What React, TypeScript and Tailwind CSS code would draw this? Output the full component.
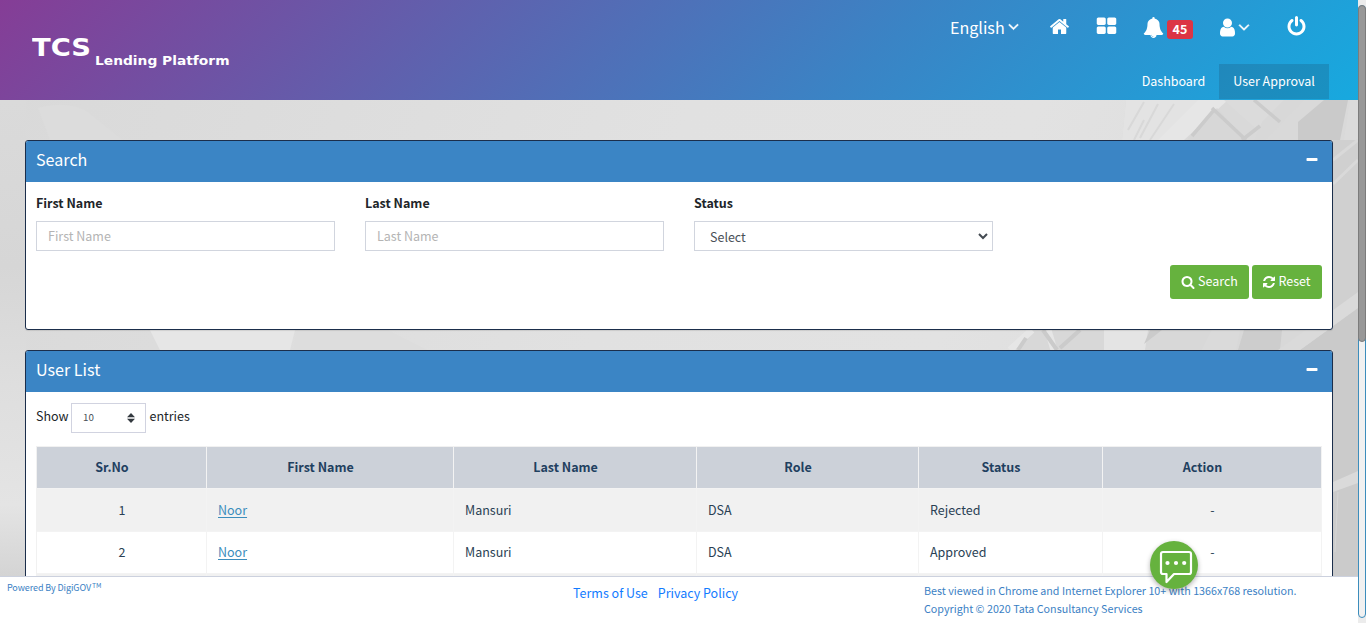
import React from "react";

const ICONS = {
  home: "M1472 992v480q0 26-19 45t-45 19h-384v-384h-256v384h-384q-26 0-45-19t-19-45v-480q0-1 .5-3t.5-3l575-474 575 474q1 2 1 6zm223-69l-62 74q-8 9-21 11h-3q-13 0-21-7l-692-577-692 577q-12 8-24 7-13-2-21-11l-62-74q-8-10-7-23.500t11-21.500l719-599q32-26 76-26t76 26l244 204v-195q0-14 9-23t23-9h192q14 0 23 9t9 23v408l219 182q10 8 11 21.500t-7 23.500z",
  grid: "M832 1024v384q0 52-38 90t-90 38h-512q-52 0-90-38t-38-90v-384q0-52 38-90t90-38h512q52 0 90 38t38 90zm0-768v384q0 52-38 90t-90 38h-512q-52 0-90-38t-38-90v-384q0-52 38-90t90-38h512q52 0 90 38t38 90zm896 768v384q0 52-38 90t-90 38h-512q-52 0-90-38t-38-90v-384q0-52 38-90t90-38h512q52 0 90 38t38 90zm0-768v384q0 52-38 90t-90 38h-512q-52 0-90-38t-38-90v-384q0-52 38-90t90-38h512q52 0 90 38t38 90z",
  power: "M1664 896q0 156-61 298t-164 245-245 164-298 61-298-61-245-164-164-245-61-298q0-182 80.500-343t226.500-270q43-32 95.500-25t83.500 50q32 42 24.500 94.500t-49.500 84.500q-98 74-151.500 181t-53.500 228q0 104 40.500 198.500t109.500 163.500 163.500 109.500 198.500 40.500 198.500-40.500 163.500-109.500 109.500-163.500 40.500-198.500q0-121-53.500-228t-151.500-181q-42-32-49.500-84.500t24.500-94.500q31-43 84-50t95 25q146 109 226.500 270t80.500 343zm-640-768v640q0 52-38 90t-90 38-90-38-38-90v-640q0-52 38-90t90-38 90 38 38 90z",
  bell: "M912 1696q0-16-16-16-59 0-101.500-42.500t-42.500-101.500q0-16-16-16t-16 16q0 73 51.500 124.500t124.500 51.500q16 0 16-16zm816-288q0 52-38 90t-90 38h-448q0 106-75 181t-181 75-181-75-75-181h-448q-52 0-90-38t-38-90q50-42 91-88t85-119.500 74.500-158.500 50-206 19.500-260q0-152 117-282.500t307-158.500q-8-19-8-39 0-40 28-68t68-28 68 28 28 68q0 20-8 39 190 28 307 158.500t117 282.500q0 139 19.500 260t50 206 74.500 158.500 85 119.500 91 88z",
  user: "M1536 1399q0 109-62.500 187t-150.500 78h-854q-88 0-150.500-78t-62.500-187q0-85 8.500-160.500t31.500-152 58.500-131 94-89 134.500-34.500q131 128 313 128t313-128q76 0 134.500 34.500t94 89 58.500 131 31.500 152 8.500 160.500zm-256-887q0 159-112.500 271.500t-271.500 112.500-271.500-112.500-112.500-271.500 112.500-271.500 271.500-112.500 271.500 112.500 112.500 271.500z",
  angle: "M1395 736q0 13-10 23l-466 466q-10 10-23 10t-23-10l-466-466q-10-10-10-23t10-23l50-50q10-10 23-10t23 10l393 393 393-393q10-10 23-10t23 10l50 50q10 10 10 23z",
  search: "M1216 832q0-185-131.500-316.500t-316.500-131.500-316.500 131.500-131.500 316.500 131.500 316.500 316.500 131.500 316.500-131.500 131.500-316.500zm512 832q0 52-38 90t-90 38q-54 0-90-38l-343-342q-179 124-399 124-143 0-273.500-55.500t-225-150-150-225-55.500-273.500 55.500-273.500 150-225 225-150 273.500-55.500 273.500 55.500 225 150 150 225 55.500 273.500q0 220-124 399l343 343q37 37 37 90z",
  refresh: "M1639 1056q0 5-1 7-64 268-268 434.500t-478 166.500q-146 0-282.500-55t-243.500-157l-129 129q-19 19-45 19t-45-19-19-45v-448q0-26 19-45t45-19h448q26 0 45 19t19 45-19 45l-137 137q71 66 161 102t187 36q134 0 250-65t186-179q11-17 53-117 8-23 30-23h192q13 0 22.500 9.500t9.500 22.500zm25-800v448q0 26-19 45t-45 19h-448q-26 0-45-19t-19-45 19-45l138-138q-148-137-349-137-134 0-250 65t-186 179q-11 17-53 117-8 23-30 23h-199q-13 0-22.500-9.500t-9.500-22.500v-7q65-268 270-434.500t480-166.500q146 0 284 55.500t245 156.500l130-129q19-19 45-19t45 19 19 45z",
  minus: "M1600 736v192q0 40-28 68t-68 28h-1216q-40 0-68-28t-28-68v-192q0-40 28-68t68-28h1216q40 0 68 28t28 68z",
};

function Icon({ name, className = "size-[21px]" }: { name: keyof typeof ICONS; className?: string }) {
  return (
    <svg viewBox="0 0 1792 1792" fill="currentColor" className={`shrink-0 overflow-visible ${className}`} aria-hidden="true">
      <path d={ICONS[name]} />
    </svg>
  );
}

function Header() {
  return (
    <header className="flex h-[100px] justify-between bg-[linear-gradient(135deg,#853d96_0%,#3a84c5_64%,#17a9df_100%)] pl-8 pr-[29px] text-white">
      <div className="flex pt-[34px] font-['DejaVu_Sans',sans-serif] font-bold">
        <span className="w-[63px] origin-left scale-x-[1.14] text-[24px] leading-[28px]">TCS</span>
        <span className="origin-left scale-x-[1.2] pt-[17px] text-[11.5px] leading-[20px]">Lending Platform</span>
      </div>
      <div className="flex flex-col items-end">
        <div className="flex h-16 items-start pr-[22px]">
          <span className="mt-[13px] w-[55px] text-[16.1px] leading-7">English</span>
          <Icon name="angle" className="mt-[18px] size-[17px] stroke-white [stroke-width:70]" />
          <Icon name="home" className="ml-[27px] mt-[16px] size-[21px]" />
          <Icon name="grid" className="ml-[26px] mt-[16px] size-[21px]" />
          <Icon name="bell" className="ml-[26px] mt-[17px] size-[21px]" />
          <span className="ml-[3px] mt-5 flex h-[19px] w-[26px] items-center justify-center rounded-[3px] bg-[#dc3545] text-[12.5px] leading-none font-bold">45</span>
          <Icon name="user" className="ml-6 mt-[17px] size-[21px]" />
          <Icon name="angle" className="-ml-[3px] mr-px mt-[18px] size-[18px] stroke-white [stroke-width:50]" />
          <Icon name="power" className="ml-[32px] mt-[16px] size-[21px]" />
        </div>
        <nav className="flex text-[12.5px]">
          <a className="flex h-[35px] w-[91px] items-center justify-center">Dashboard</a>
          <a className="flex h-[35px] w-[110px] items-center justify-center bg-[#1c2c40]/18">User Approval</a>
        </nav>
      </div>
    </header>
  );
}

function Panel({ title, className = "", children }: { title: string; className?: string; children: React.ReactNode }) {
  return (
    <section className={`relative w-[1308px] overflow-hidden rounded-[3px] border border-[#1b2e4b] bg-white shadow-[0_1px_1px_rgba(0,0,0,0.1)] ${className}`}>
      <div className="flex h-[41px] items-center justify-between bg-[#3b85c5] pl-[10px] pr-[13px] text-white">
        <h2 className="-mt-[5px] text-[16.1px]">{title}</h2>
        <Icon name="minus" className="-mt-[3px] size-[14px]" />
      </div>
      {children}
    </section>
  );
}

function SearchPanel() {
  return (
    <Panel title="Search" className="h-[190px]">
      <div className="flex gap-[30px] px-[10px] pt-[10px] text-[12.5px]">
        {["First Name", "Last Name"].map((label) => (
          <label key={label} className="flex w-[299px] flex-col">
            <span className="h-[29px] leading-[21px] font-bold text-[#212529]">{label}</span>
            <input
              placeholder={label}
              className="h-[30px] border border-[#d1d5de] bg-white px-[11px] pb-[2px] text-[12.5px] placeholder:text-[#b4b4b4]"
            />
          </label>
        ))}
        <div className="flex w-[299px] flex-col">
          <span className="h-[29px] leading-[21px] font-bold text-[#212529]">Status</span>
          <div className="flex h-[30px] items-center justify-between border border-[#d1d5de] pr-[4px] pl-[15px] text-[#495057]">
            <span className="pt-[2px]">Select</span>
            <svg viewBox="0 0 10 7" className="h-[7px] w-[10px]" fill="none" stroke="#444b52" strokeWidth="2">
              <path d="M1 1l4 4 4-4" />
            </svg>
          </div>
        </div>
      </div>
      <div className="mt-[14px] flex justify-end gap-[3px] pr-[10px] text-[12.5px] text-white">
        <button className="flex h-[34px] w-[79px] items-center justify-center gap-[3px] rounded-[3px] bg-[#66b23e] pb-[2px]">
          <Icon name="search" className="mt-px size-[14px]" />
          Search
        </button>
        <button className="flex h-[34px] w-[70px] items-center justify-center gap-[2px] rounded-[3px] bg-[#66b23e] pr-px pb-[2px]">
          <Icon name="refresh" className="mt-px size-[14px]" />
          Reset
        </button>
      </div>
    </Panel>
  );
}

const COLUMNS = ["Sr.No", "First Name", "Last Name", "Role", "Status", "Action"];
const USERS = [
  { no: "1", first: "Noor", last: "Mansuri", role: "DSA", status: "Rejected", row: "h-[43px] bg-[#f1f1f1]" },
  { no: "2", first: "Noor", last: "Mansuri", role: "DSA", status: "Approved", row: "h-[42px] bg-white" },
  { no: "", first: "", last: "", role: "", status: "", row: "h-[43px] bg-[#f1f1f1]" },
];

function UserTable() {
  const cell = "border-r border-b border-[#f3f3f3] pr-[10px] pl-[11px] py-0";
  return (
    <table className="ml-[10px] w-[1286px] table-fixed border-separate border-spacing-0 border-t border-l border-[#f1f1f1] text-[12.5px]">
      <colgroup>
        <col className="w-[170px]" />
        <col className="w-[247px]" />
        <col className="w-[243px]" />
        <col className="w-[222px]" />
        <col className="w-[184px]" />
        <col className="w-[219px]" />
      </colgroup>
      <thead>
        <tr className="h-[42px] bg-[#ccd1d9] text-[#1f4060]">
          {COLUMNS.map((c) => (
            <th key={c} className="border-r border-b border-[#f3f3f3] py-0 pr-[29px] pl-[10px] text-center font-bold">
              {c}
            </th>
          ))}
        </tr>
      </thead>
      <tbody className="text-[#2a3f54]">
        {USERS.map((u, i) => (
          <tr key={i} className={u.row}>
            <td className={`${cell} text-center`}>{u.no}</td>
            <td className={cell}>
              <a className="text-[#3c8dbc] underline decoration-1 underline-offset-2">{u.first}</a>
            </td>
            <td className={cell}>{u.last}</td>
            <td className={cell}>{u.role}</td>
            <td className={cell}>{u.status}</td>
            <td className={`${cell} text-center`}>{u.no && "-"}</td>
          </tr>
        ))}
      </tbody>
    </table>
  );
}

function UserListPanel() {
  return (
    <Panel title="User List" className="mt-5 h-[300px]">
      <div className="mt-[11px] mb-[13px] flex h-[30px] items-center pl-[10px] text-[12.5px] text-[#212529]">
        <span className="-mt-[3px] w-[35px]">Show</span>
        <div className="flex h-[30px] w-[75px] items-center justify-between border border-[#d1d3e0] pr-[10px] pl-[11px] text-[9.8px] text-[#495057]">
          <span className="pb-[2px]">10</span>
          <svg viewBox="0 0 8 10" className="h-[10px] w-[8px]" fill="#343a40">
            <path d="M4 0l4 4.200H0zM4 10l4-4.200H0z" />
          </svg>
        </div>
        <span className="-mt-[3px] ml-[3.500px]">entries</span>
      </div>
      <UserTable />
    </Panel>
  );
}

function Backdrop() {
  return (
    <svg className="absolute inset-0 h-full w-full" viewBox="0 0 1358 476" preserveAspectRatio="none" aria-hidden="true">
      <defs>
        <linearGradient id="sky" x1="0" y1="0" x2="1" y2="0.15">
          <stop offset="0" stopColor="#d9d9d9" />
          <stop offset="0.5" stopColor="#e1e1e1" />
          <stop offset="0.75" stopColor="#e2e2e2" />
          <stop offset="1" stopColor="#dcdcdc" />
        </linearGradient>
        <linearGradient id="left" x1="0" y1="0" x2="0" y2="1">
          <stop offset="0" stopColor="#dadada" />
          <stop offset="0.35" stopColor="#d6d6d6" />
          <stop offset="0.6" stopColor="#dedede" />
          <stop offset="0.85" stopColor="#e4e4e4" />
          <stop offset="1" stopColor="#d4d4d4" />
        </linearGradient>
      </defs>
      <rect width="1358" height="476" fill="url(#sky)" />
      <rect width="26" height="476" fill="url(#left)" />
      <path d="M38 8q30-8 50 4l35 28H50z" fill="#dcdcdc" />
      <path d="M150 230h145l-5 20H160z" fill="#e6e6e6" />
      <path d="M297 230h90l40 20H293z" fill="#dddddd" />
      <path d="M1126 0h232v40h-236z" fill="#d9d9d9" />
      <path d="M1126 0h80l-44 40h-40z" fill="#e3e3e3" />
      <path d="M1128 30l16-28M1140 38l18-34M1150 40l24-36M1134 40l10-20" stroke="#d8d8d8" strokeWidth="2" fill="none" />
      <path d="M1198 0h30l-44 40h-26z" fill="#e6e6e6" />
      <path d="M1217 8l28 32h-58z" fill="#d7d7d7" />
      <path d="M1224 0h62l-24 34z" fill="#dbdbdb" />
      <path d="M1262 22l22-22h20l-38 40h-12z" fill="#d8d8d8" />
      <path d="M1212 8l34 32M1242 40l18-14M1254 0l26 22M1192 36l22-26" stroke="#cbcbcb" strokeWidth="3.500" fill="none" />
      <path d="M1298 22l26-22h24l-8 40h-42z" fill="#cacaca" />
      <path d="M1350 0h8v40h-14z" fill="#dbdbdb" />
      <path d="M1333 40h25v191h-25z" fill="#d0d0d0" />
      <path d="M1333 60l25-20M1333 84l25-24" stroke="#d9d9d9" strokeWidth="3" fill="none" />
      <path d="M1010 250l20-20h328v20z" fill="#d8d8d8" />
      <path d="M1010 250l22-20M1054 250l-6-20" stroke="#e6e6e6" strokeWidth="7" fill="none" />
      <path d="M1043 230l14 20M1018 250l8-12M1080 230l-20 18" stroke="#cbcbcb" strokeWidth="4" fill="none" />
      <path d="M1104 230h44l-3 20h-41z" fill="#e4e4e4" />
      <path d="M1162 230l-18 14 6-14z" fill="#cbcbcb" />
      <path d="M1212 230h28l-4 20h-34z" fill="#dadada" />
      <path d="M1244 230h38l-2 20h-42z" fill="#cdcdcd" />
      <path d="M1300 250l58-42v42z" fill="#cacaca" />
      <path d="M1300 250l58-42v-16l-80 58z" fill="#dadada" />
      <path d="M1333 250h25v226h-25z" fill="#cbcbcb" />
      <path d="M1333 382l25-11v12l-25 9z" fill="#dadada" />
      <path d="M1338 392l-3 60" stroke="#d5d5d5" strokeWidth="1" />
    </svg>
  );
}

function Footer() {
  return (
    <footer className="flex h-[47px] border-t border-[#ccd1de] bg-white text-[#3b7fc4]">
      <div className="w-[573px] pt-[2px] pl-[7px] text-[9px] leading-[18px] tracking-[-0.09px]">
        Powered By DigiGOV<sup className="relative -top-[3px] ml-[1px] align-baseline text-[6.7px] leading-none">TM</sup>
      </div>
      <div className="flex w-[351px] gap-[10px] pt-[5px] text-[12.5px] leading-[21px] text-[#127bff]">
        <a>Terms of Use</a>
        <a>Privacy Policy</a>
      </div>
      <div className="pt-[5px] text-[10.73px] leading-[18px]">
        <p>Best viewed in Chrome and Internet Explorer 10+ with 1366x768 resolution.</p>
        <p>Copyright © 2020 Tata Consultancy Services</p>
      </div>
    </footer>
  );
}

function ChatButton() {
  return (
    <button className="absolute top-[541px] left-[1150px] flex size-12 items-center justify-center rounded-full bg-[#66b23e] shadow-[0_2px_5px_rgba(0,0,0,0.3)]">
      <svg viewBox="0 0 48 48" className="size-12" fill="none" stroke="#fff" strokeWidth="2.200" strokeLinejoin="round">
        <path d="M13 11h26a2 2 0 0 1 2 2v18a2 2 0 0 1-2 2H24l-7.500 8V33H13a2 2 0 0 1-2-2V13a2 2 0 0 1 2-2z" />
        <g fill="#fff" stroke="none">
          <circle cx="17.500" cy="22" r="2.100" />
          <circle cx="26" cy="22" r="2.100" />
          <circle cx="34.200" cy="22" r="2.100" />
        </g>
      </svg>
    </button>
  );
}

function Scrollbar() {
  return (
    <div className="h-full w-2 bg-[#ececec] pt-[5px]">
      <div className="h-[613px] rounded-[4px] border border-[#3c8dbc] bg-[#f1f1f1]">
        <div className="-mx-px -mt-px h-[337px] rounded-[4px] border border-[#7c7c7c] bg-[#989898]" />
      </div>
    </div>
  );
}

export default function App() {
  return (
    <div className="relative flex h-[623px] w-[1366px] overflow-hidden font-['Noto_Sans_CJK_SC','Noto_Sans',sans-serif]">
      <div className="flex w-[1358px] flex-col">
        <Header />
        <main className="relative h-[476px] overflow-hidden pt-10 pl-[25px]">
          <Backdrop />
          <SearchPanel />
          <UserListPanel />
        </main>
        <Footer />
      </div>
      <Scrollbar />
      <ChatButton />
    </div>
  );
}
